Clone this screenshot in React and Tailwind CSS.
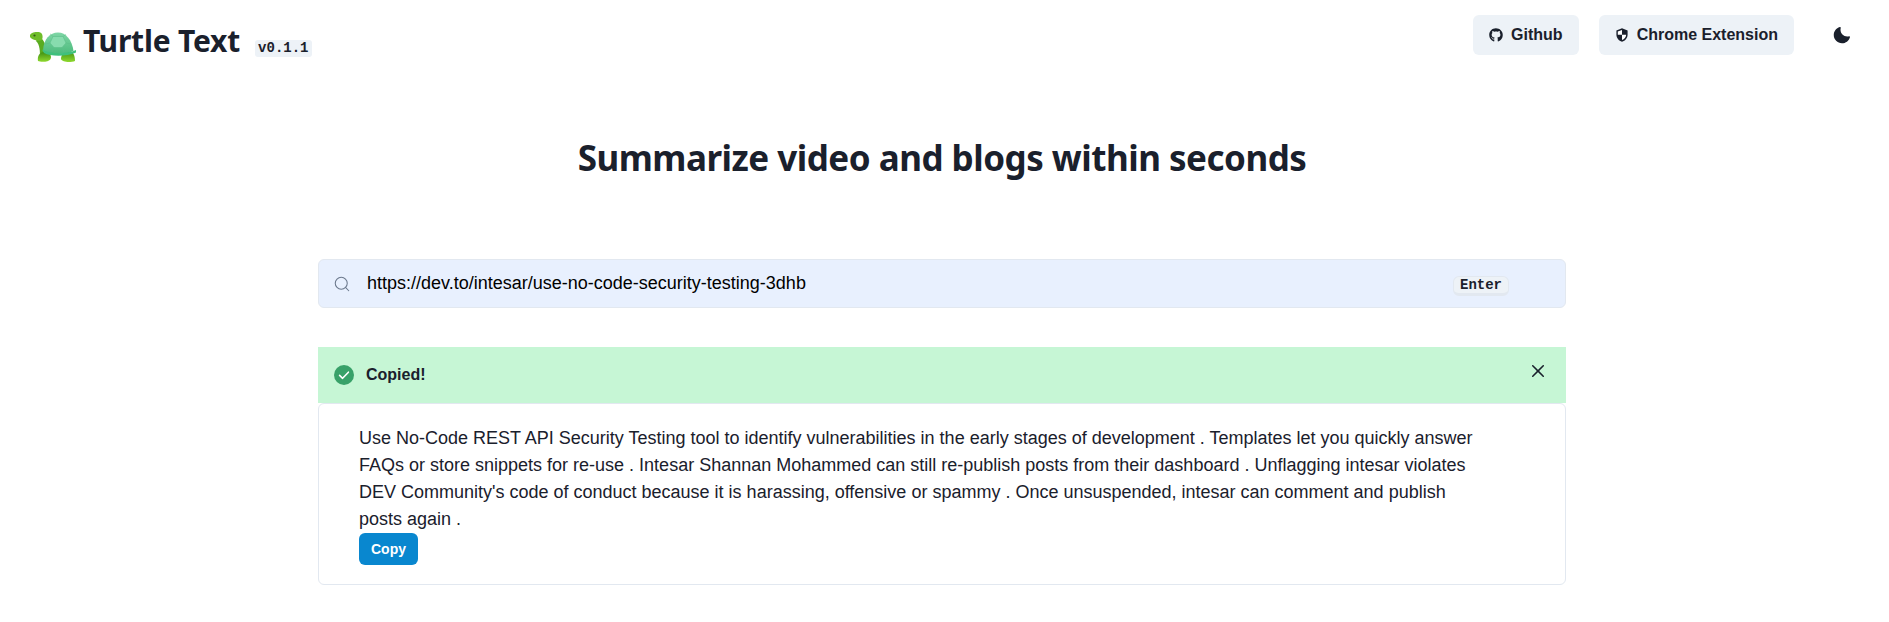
import React from "react";
import { Search } from "lucide-react";
import { FaGithub } from "react-icons/fa";

function Turtle() {
  return (
    <svg width="46" height="31" viewBox="0 0 46 31" className="shrink-0">
      <defs>
        <linearGradient id="leg" x1="0" y1="0" x2="0" y2="1">
          <stop offset="0" stopColor="#3f8f12" />
          <stop offset="1" stopColor="#8fd92f" />
        </linearGradient>
        <linearGradient id="shell" x1="0" y1="0" x2="0" y2="1">
          <stop offset="0" stopColor="#7fd6a6" />
          <stop offset="1" stopColor="#4cbb7c" />
        </linearGradient>
      </defs>
      <path d="M8 6 C11 6 13.5 9 15 13 L20 24 L10 27 C10 20 10 14 6 10 Z" fill="#5aab20" />
      <path d="M0 4 C1 1.5 5 1 8 1 C11 1 13 3 12.5 7 C12 10 10 10 7 9.5 C4 9 1 8 0 6 Z" fill="#6fbd2a" />
      <circle cx="4.5" cy="4.5" r="1.1" fill="#35591a" />
      <path d="M8 30 C7 25 10 21 14 21 C20 21 22 25 20.5 28 C19 31 11 31.5 8 30 Z" fill="url(#leg)" />
      <path d="M31 28 C31 24 34 20 38 20 C43 20 45 24 45 30 C41 31.5 32 31.5 31 28 Z" fill="url(#leg)" />
      <path d="M13 20 C13.5 8 20 1.5 28 1.5 C36 1.5 42 9 43.5 20 C35 24 20 24 13 20 Z" fill="url(#shell)" />
      <path d="M23 5.5 L33 5.5 L36 12 L32 16.5 L24 16.5 L20 12 Z" fill="#88dcae" stroke="#5cc08a" strokeWidth="0.6" />
      <path d="M23 5.5 L20 2.8 M33 5.5 L36 3.5 M36 12 L41 13 M32 16.5 L34 21 M24 16.5 L22 21 M20 12 L15 13" stroke="#5cc08a" strokeWidth="0.6" fill="none" />
      <path d="M12 18.5 C20 23 36 23.5 46 19 L46 21.5 C36 26 20 25.5 14 22 Z" fill="#3fc07c" />
    </svg>
  );
}

function ShieldIcon() {
  return (
    <svg width="12" height="14" viewBox="0 0 12 14" fill="#1a202c" className="shrink-0">
      <path d="M6 .3 L11.6 2.4 V6.4 C11.6 10 9.3 12.6 6 13.7 C2.7 12.6 .4 10 .4 6.4 V2.4 Z" />
      <path d="M6 1.9 V6.8 H10.2 C10 9.2 8.4 11.2 6 12.1 V6.8 H1.8 V3.4 Z" fill="#ffffff" />
    </svg>
  );
}

function MoonIcon() {
  return (
    <svg width="18" height="18" viewBox="0 0 24 24" fill="#1a202c">
      <path d="M21.4,13.7C20.6,13.9,19.8,14,19,14c-5,0-9-4-9-9c0-0.8,0.1-1.6,0.3-2.4c0.1-0.3,0-0.7-0.3-1c-0.3-0.3-0.6-0.4-1-0.3C4.3,2.7,1,7.1,1,12c0,6.1,4.9,11,11,11c4.9,0,9.3-3.3,10.6-8.1c0.1-0.3,0-0.7-0.3-1C22.1,13.7,21.7,13.6,21.4,13.7z" />
    </svg>
  );
}

function CloseIcon() {
  return (
    <svg width="12" height="12" viewBox="0 0 24 24" fill="#1a202c" className="shrink-0">
      <path d="M.439,21.44a1.5,1.5,0,0,0,2.122,2.121L11.823,14.3a.25.25,0,0,1,.354,0l9.262,9.263a1.5,1.5,0,1,0,2.122-2.121L14.3,12.177a.25.25,0,0,1,0-.354l9.263-9.262A1.5,1.5,0,0,0,21.439.44L12.177,9.7a.25.25,0,0,1-.354,0L2.561.44A1.5,1.5,0,0,0,.439,2.561L9.7,11.823a.25.25,0,0,1,0,.354Z" />
    </svg>
  );
}

function CheckCircle() {
  return (
    <svg width="20" height="20" viewBox="0 0 20 20" className="shrink-0">
      <circle cx="10" cy="10" r="10" fill="#38a169" />
      <path d="M5.6 10.4 L8.6 13.3 L14.4 7.2" fill="none" stroke="#ffffff" strokeWidth="1.6" strokeLinecap="round" strokeLinejoin="round" />
    </svg>
  );
}

const sans = "font-['Liberation_Sans',Arial,sans-serif]";
const mono = "font-['Liberation_Mono',monospace]";
const heading = "font-['Noto_Sans',sans-serif]";

export default function App() {
  return (
    <div className={`min-h-[622px] bg-white text-[#1a202c] ${sans}`}>
      <header className="flex items-start justify-between pt-[15px] pl-[30px] pr-[27px]">
        <div className="flex items-start mt-[16px]">
          <Turtle />
          <h1 className={`ml-[7px] -mt-[8px] text-[30px] leading-[36px] font-bold tracking-[-0.2px] ${heading}`}>Turtle Text</h1>
          <code className={`ml-[15px] mt-[9px] h-[17px] px-[3px] rounded-[3px] bg-[#edf2f7] text-[14px] leading-[17px] font-bold ${mono}`}>v0.1.1</code>
        </div>
        <div className="flex items-center">
          <button className="flex items-center h-10 px-4 rounded-md bg-[#edf2f7] text-base font-bold">
            <FaGithub className="mr-2 text-[14px]" />
            Github
          </button>
          <button className="flex items-center h-10 ml-5 px-[17px] rounded-md bg-[#edf2f7] text-base font-bold">
            <ShieldIcon />
            <span className="ml-[9px] -mr-[1px]">Chrome Extension</span>
          </button>
          <button className="flex items-center justify-center w-10 h-10 ml-[28px]">
            <MoonIcon />
          </button>
        </div>
      </header>

      <h2 className={`mt-[73px] text-center text-[35px] leading-[45px] font-bold tracking-[-0.5px] pr-[5px] ${heading}`}>
        Summarize video and blogs within seconds
      </h2>

      <main className="ml-[318px] mt-[79px] w-[1248px]">
        <div className="flex items-center h-[49px] rounded-md border border-[#e2e8f0] bg-[#e8f0fe] pl-[14px] pr-[56px]">
          <Search size={18} strokeWidth={1.4} className="text-[#6b788c] shrink-0" />
          <span className="ml-[16px] text-[18px] text-black">https://dev.to/intesar/use-no-code-security-testing-3dhb</span>
          <kbd className={`ml-auto mt-1 h-[20px] px-[6px] rounded-md border border-[#e2e8f0] border-b-[3px] bg-[#edf2f7] text-[14px] leading-[16px] font-bold ${mono}`}>Enter</kbd>
        </div>

        <div className="flex items-center h-[56px] mt-[39px] bg-[#c6f6d5] pl-4 pr-[22px]">
          <CheckCircle />
          <span className="ml-3 text-base font-bold">Copied!</span>
          <span className="ml-auto -mt-2"><CloseIcon /></span>
        </div>

        <div className="rounded-md border border-[#e2e8f0] pt-[21px] pb-[20px] pl-10 pr-[84px] h-[182px]">
          <p className="text-[18px] leading-[27px]">
            Use No-Code REST API Security Testing tool to identify vulnerabilities in the early stages of development . Templates let you quickly answer FAQs or store snippets for re-use . Intesar Shannan Mohammed can still re-publish posts from their dashboard . Unflagging intesar violates DEV Community's code of conduct because it is harassing, offensive or spammy . Once unsuspended, intesar can comment and publish posts again .
          </p>
          <button className="flex items-center justify-center h-8 w-[59px] rounded-md bg-[#0987cf] text-white text-sm font-bold">Copy</button>
        </div>
      </main>
    </div>
  );
}
